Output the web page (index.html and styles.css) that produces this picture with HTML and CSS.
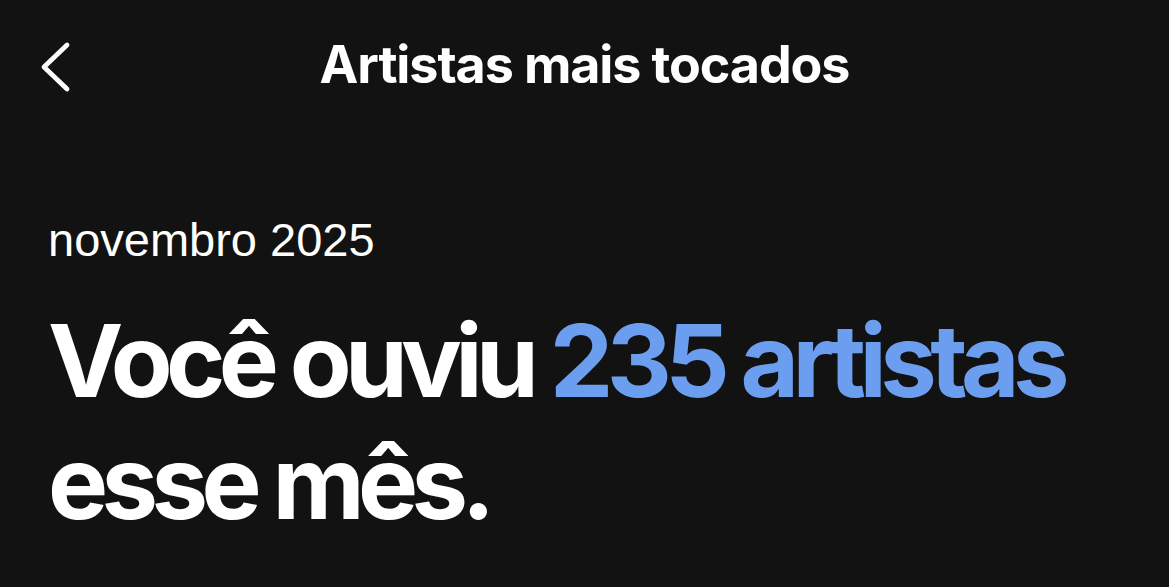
FILE: index.html
```html
<!DOCTYPE html>
<html lang="pt-BR">
<head>
    <meta charset="UTF-8">
    <meta name="viewport" content="width=device-width, initial-scale=1.0">
    <title>Artistas mais tocados</title>
    <link rel="stylesheet" href="styles.css">
</head>
<body>
    <div class="screen">
        <header class="topbar">
            <button class="back" aria-label="Voltar">
                <svg width="34" height="52" viewBox="0 0 34 52">
                    <path d="M27 4 L4 26 L27 48" fill="none" stroke="#ffffff" stroke-width="4.8" stroke-linecap="round" stroke-linejoin="round"/>
                </svg>
            </button>
            <h1 class="title">Artistas mais tocados</h1>
        </header>
        <section class="summary">
            <p class="period">novembro 2025</p>
            <h2 class="headline">Você ouviu <span class="highlight">235 artistas</span> esse mês.</h2>
        </section>
    </div>
</body>
</html>
```

FILE: styles.css
```css
body {
    margin: 0;
    background: #121212;
    color: #ffffff;
    font-family: Inter, "Noto Sans", sans-serif;
}
.screen {
    height: 587px;
    overflow: hidden;
}
.topbar {
    position: relative;
    display: flex;
    justify-content: center;
    align-items: center;
    height: 130px;
}
.back {
    position: absolute;
    left: 40px;
    top: 41px;
    background: none;
    border: none;
    padding: 0;
    cursor: pointer;
}
.back svg {
    display: block;
}
.title {
    margin: 0;
    font-size: 52px;
    font-weight: 700;
    letter-spacing: -1.1px;
    line-height: 1;
}
.summary {
    padding: 82px 48px 0;
}
.period {
    margin: 0 0 31px;
    font-family: "Liberation Sans", Arial, sans-serif;
    font-size: 47px;
    line-height: 1.2;
}
.headline {
    margin: 0;
    font-size: 101px;
    font-weight: 700;
    letter-spacing: -6.6px;
    line-height: 122px;
}
.highlight {
    color: #6c9ef0;
}
```
